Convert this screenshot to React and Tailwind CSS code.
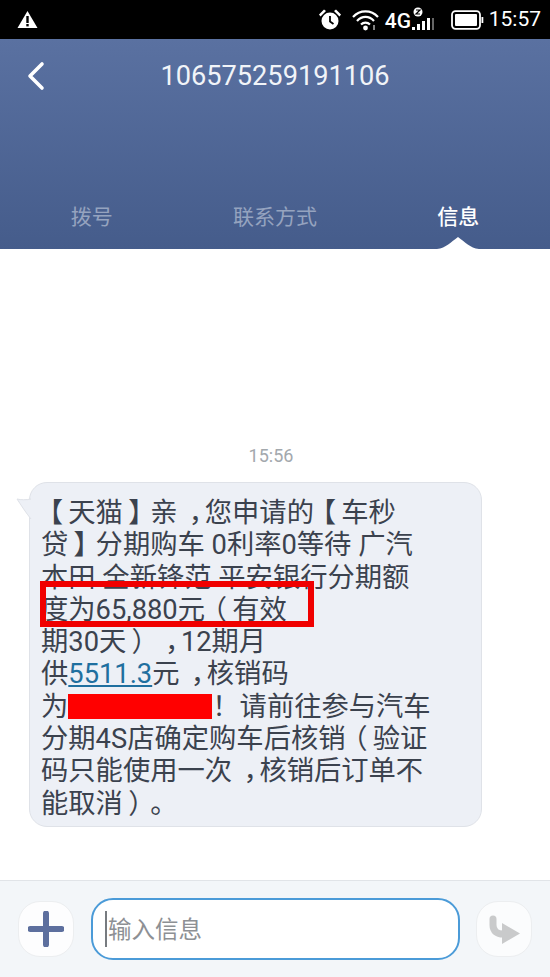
// punctuation sits closer to the middle of its cell on this phone's font
function Comma() {
  return <span className="inline-block w-[1em] pl-[9px] text-center [font-feature-settings:'halt']">，</span>;
}

function Open({ children }) {
  return <span className="inline-block w-[1em] pl-[3px] text-center [font-feature-settings:'halt']">{children}</span>;
}

function Close({ children }) {
  return <span className="inline-block w-[1em] pr-[3px] text-center [font-feature-settings:'halt']">{children}</span>;
}

function StatusBar() {
  return (
    <div className="h-[39px] bg-black flex items-center text-white shrink-0">
      <svg className="ml-[17px]" width="21" height="19" viewBox="0 0 21 19">
        <path d="M10.5 1 L20.5 18 H0.5 Z" fill="#fff" />
        <rect x="9.3" y="6" width="2.4" height="7" fill="#000" />
        <rect x="9.3" y="14" width="2.4" height="2.4" fill="#000" />
      </svg>
      <div className="ml-auto flex items-center">
        {/* alarm */}
        <svg width="24" height="23" viewBox="0 0 24 23">
          <circle cx="12" cy="13" r="8.5" fill="#fff" />
          <path d="M12 8 V13.5 L15.5 16" stroke="#000" strokeWidth="1.8" fill="none" />
          <path d="M1 6.5 L6 1.5 L8 3 L2.5 8.5 Z M23 6.5 L18 1.5 L16 3 L21.5 8.5 Z" fill="#fff" />
        </svg>
        {/* wifi */}
        <svg className="ml-[10px]" width="27" height="22" viewBox="0 0 27 22">
          <path d="M1 8 C8 0.5 19 0.5 26 8" stroke="#fff" strokeWidth="2.2" fill="none" />
          <path d="M5 12 C10 6.5 17 6.5 22 12" stroke="#fff" strokeWidth="2.2" fill="none" />
          <path d="M9 15.5 C11.5 13 15.5 13 18 15.5" stroke="#fff" strokeWidth="2.2" fill="none" />
          <circle cx="13.5" cy="19" r="2.4" fill="#fff" />
          <path d="M22 16 V21" stroke="#ddd" strokeWidth="1.2" />
        </svg>
        <span className="ml-[6px] font-['Roboto',sans-serif] font-medium text-[21px] leading-none w-[27px] mt-[4px]">4G</span>
        {/* signal */}
        <svg width="24" height="26" viewBox="0 0 24 26">
          <circle cx="6" cy="5" r="4.5" fill="#fff" />
          <path d="M4 3 H8 L4 7 H8" stroke="#000" strokeWidth="1.2" fill="none" />
          <rect x="0" y="20" width="3" height="3" fill="#fff" />
          <rect x="5" y="17" width="3" height="6" fill="#fff" />
          <rect x="10" y="14" width="3" height="9" fill="#fff" />
          <rect x="15" y="11" width="3" height="12" fill="#fff" />
          <rect x="20" y="11" width="2" height="12" fill="#666" />
        </svg>
        {/* battery */}
        <svg className="ml-[15px]" width="33" height="20" viewBox="0 0 33 20">
          <rect x="1" y="1.2" width="28" height="17.6" rx="3.5" stroke="#fff" strokeWidth="1.8" fill="none" />
          <rect x="4" y="4" width="22" height="12" rx="1" fill="#fff" />
          <rect x="30.5" y="7" width="1.8" height="6" fill="#fff" />
        </svg>
        <span className="ml-[5px] mr-[9px] font-['Roboto',sans-serif] text-[21px] leading-none">15:57</span>
      </div>
    </div>
  );
}

function Header() {
  return (
    <div className="relative h-[210px] shrink-0 flex flex-col bg-gradient-to-b from-[#5a71a1] to-[#455c8b]">
      <div className="h-[75px] flex items-center justify-center relative">
        <svg className="absolute left-[26px] top-[22px]" width="20" height="30" viewBox="0 0 20 30">
          <path d="M16 3 L4 15 L16 27" stroke="#fff" strokeWidth="3.6" strokeLinecap="round" strokeLinejoin="round" fill="none" />
        </svg>
        <span className="font-['Roboto',sans-serif] text-[27.2px] text-[#f1f4f8]">106575259191106</span>
      </div>
      <div className="mt-auto mb-[20px] grid grid-cols-3 text-center text-[21px] leading-[28px] font-['Noto_Sans_CJK_SC',sans-serif]">
        <span className="text-[#95a3bf]">拨号</span>
        <span className="text-[#95a3bf]">联系方式</span>
        <span className="text-white font-medium">信息</span>
      </div>
      <svg className="absolute left-[437px] bottom-0" width="42" height="13" viewBox="0 0 42 13">
        <path d="M0 13 C9 12 14 6 21 1 C28 6 33 12 42 13 Z" fill="#fff" />
      </svg>
    </div>
  );
}

function Bubble() {
  return (
    <div className="relative ml-[29px] w-[453px] h-[345px] mt-[15px] rounded-[18px] bg-[#edf0f6] border border-[#dfe2e8] pl-[11px] pt-[14px] text-[27.3px] leading-[32.3px] text-[#3b424e] whitespace-nowrap font-['Roboto','Noto_Sans_CJK_SC',sans-serif]">
      <svg className="absolute left-[-14px] top-[14px]" width="16" height="24" viewBox="0 0 16 24">
        <path d="M15 2 C10 3 5 3 1 2 C5 8 10 16 15 22 Z" fill="#edf0f6" />
        <path d="M15 2 C10 3 5 3 1 2 C5 8 10 16 15 22" fill="none" stroke="#dfe2e8" />
      </svg>
      <div><Open>【</Open>天猫<Close>】</Close>亲<Comma />您申请的<Open>【</Open>车秒</div>
      <div>贷<Close>】</Close>分期购车 0利率0等待 广汽</div>
      <div>本田 全新锋范 平安银行分期额</div>
      <div>度为65,880元<Open>（</Open>有效</div>
      <div>期30天<Close>）</Close><Comma />12期月</div>
      <div>
        供<span className="text-[#1f6f9f] underline underline-offset-2">5511.3</span>元<Comma />核销码
      </div>
      <div className="flex items-center">
        为<span className="inline-block w-[144px] h-[25px] bg-[#ff0000]"></span>！请前往参与汽车
      </div>
      <div>分期4S店确定购车后核销<Open>（</Open>验证</div>
      <div>码只能使用一次<Comma />核销后订单不</div>
      <div>能取消<Close>）</Close>。</div>
      {/* highlight drawn over the amount line */}
      <div className="absolute left-[10px] top-[98px] w-[274px] h-[46px] border-[6px] border-[#f00000]"></div>
    </div>
  );
}

function Composer() {
  return (
    <div className="h-[97px] shrink-0 bg-[#f3f6f9] border-t border-[#e1e4e8] flex items-center pl-[18px] pr-[18px]">
      <button className="w-[56px] h-[56px] rounded-[22px] bg-[#fdfdfe] border border-[#eceef0] flex items-center justify-center">
        <svg width="36" height="36" viewBox="0 0 36 36">
          <path d="M18 2.5 V33.5 M2.5 18 H33.5" stroke="#5d6f9e" strokeWidth="6" strokeLinecap="round" />
        </svg>
      </button>
      <div className="ml-[17px] w-[369px] h-[62px] rounded-[22px] bg-white border-2 border-[#4b9bd8] relative flex items-center pl-[15px] text-[23.5px] text-[#8d9094] font-['Noto_Sans_CJK_SC',sans-serif]">
        <span className="absolute left-[12px] top-[11px] w-[2px] h-[36px] bg-[#777b80]"></span>
        输入信息
      </div>
      <button className="ml-auto w-[56px] h-[56px] rounded-[22px] bg-[#fbfcfd] border border-[#eceef0] flex items-center justify-center">
        <svg width="32" height="32" viewBox="0 0 32 32">
          <path d="M5 6 V12 C5 18 9 21 15 21" stroke="#c9cacb" strokeWidth="7" fill="none" strokeLinecap="round" />
          <path d="M14 10 L32 20.5 L14 31 Z" fill="#c9cacb" />
        </svg>
      </button>
    </div>
  );
}

export default function App() {
  return (
    <div className="w-[550px] h-[977px] flex flex-col bg-white overflow-hidden">
      <StatusBar />
      <Header />
      <div className="flex-1 pt-[196px] font-['Roboto',sans-serif]">
        <div className="text-center text-[18px] leading-[22px] text-[#a3a8ad] pr-[8px]">15:56</div>
        <Bubble />
      </div>
      <Composer />
    </div>
  );
}
